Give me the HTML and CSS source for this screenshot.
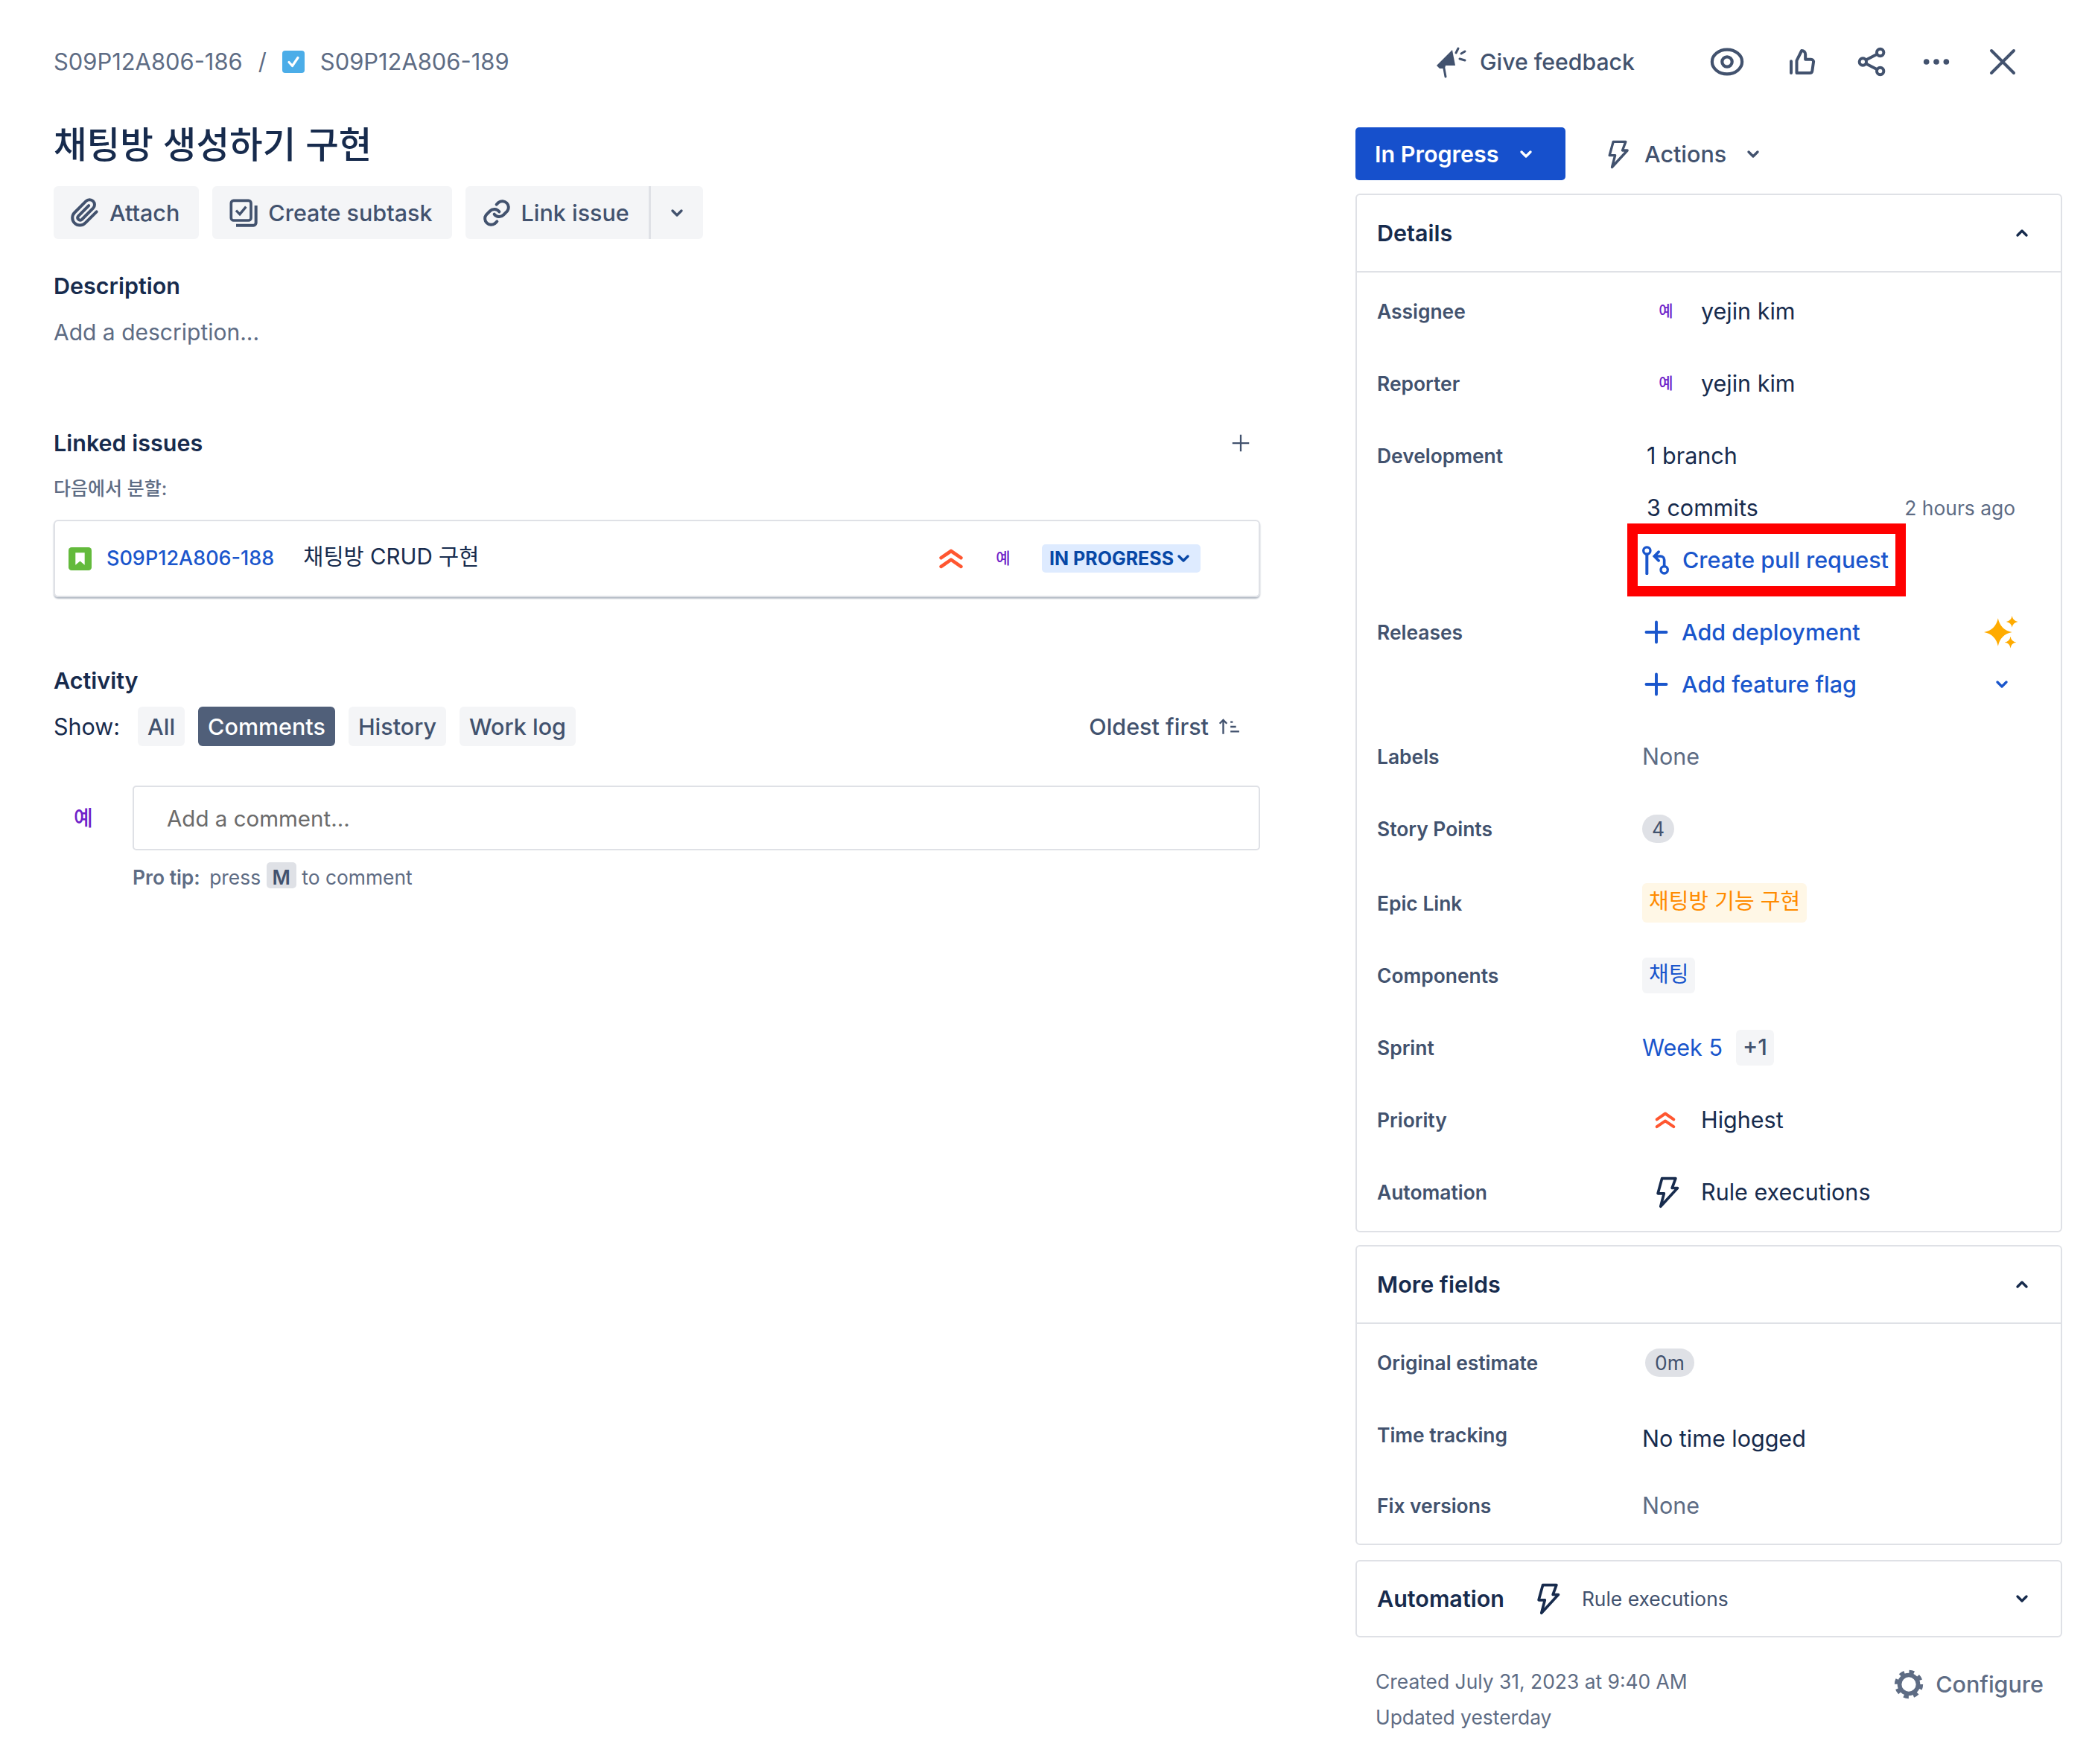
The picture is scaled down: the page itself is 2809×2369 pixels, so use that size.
FILE: index.html
```html
<!DOCTYPE html>
<html lang="ko">
  <head>
    <meta charset="UTF-8" />
    <meta name="viewport" content="width=device-width, initial-scale=1.0" />
    <title>S09P12A806-189</title>
    <link rel="stylesheet" href="styles.css">
  </head>
  <body>
    <svg class="defs" aria-hidden="true">
      <symbol id="chev-down" viewBox="0 0 20 14"><path d="M4 4l6 6 6-6" fill="none" stroke="currentColor" stroke-width="3.4" stroke-linecap="round" stroke-linejoin="round"/></symbol>
      <symbol id="chev-up" viewBox="0 0 20 14"><path d="M4 10l6-6 6 6" fill="none" stroke="currentColor" stroke-width="3.4" stroke-linecap="round" stroke-linejoin="round"/></symbol>
      <symbol id="bolt" viewBox="0 0 24 24"><path d="M8.5 2h10l-2.6 7h4L7.5 22.5 10 13H5.500z" fill="none" stroke="currentColor" stroke-width="2" stroke-linejoin="round"/></symbol>
      <symbol id="plus" viewBox="0 0 24 24"><path d="M12 3v18M3 12h18" fill="none" stroke="currentColor" stroke-width="2.600" stroke-linecap="round"/></symbol>
      <symbol id="highest" viewBox="0 0 24 24"><path d="M4 11.500l8-5.500 8 5.500M4 18.500l8-5.500 8 5.500" fill="none" stroke="#ff5630" stroke-width="2.800" stroke-linecap="round" stroke-linejoin="round"/></symbol>
    </svg>

    <main class="page">
      <section class="left">
        <nav class="crumbs">
          <span>S09P12A806-186</span>
          <span class="slash">/</span>
          <svg class="crumb-icon" viewBox="0 0 30 30"><rect width="30" height="30" rx="4" fill="#4bade8"/><path d="M9 15.500l4.500 5L21 9.500" fill="none" stroke="#fff" stroke-width="3.200" stroke-linecap="round" stroke-linejoin="round"/></svg>
          <span>S09P12A806-189</span>
        </nav>

        <h1 class="title">채팅방 생성하기 구현</h1>

        <div class="tools">
          <button class="tool">
            <svg class="ico" viewBox="0 0 24 24"><path d="M21.400 11l-9.200 9.200a6 6 0 0 1-8.500-8.500l9.200-9.200a4 4 0 0 1 5.700 5.700l-9.200 9.200a2 2 0 0 1-2.800-2.800l8.500-8.500" fill="none" stroke="currentColor" stroke-width="2.400" stroke-linecap="round" stroke-linejoin="round"/></svg>
            Attach
          </button>
          <button class="tool">
            <svg class="ico" viewBox="0 0 24 24"><rect x="2" y="2" width="16" height="16" rx="2" fill="none" stroke="currentColor" stroke-width="2.200"/><path d="M6 10l3 3 5-6" fill="none" stroke="currentColor" stroke-width="2"/><path d="M22 6v14a2 2 0 0 1-2 2H6" fill="none" stroke="currentColor" stroke-width="2.400"/></svg>
            Create subtask
          </button>
          <div class="tool-split">
            <button class="tool tool-link">
              <svg class="ico" viewBox="0 0 24 24"><path d="M10 13a5 5 0 0 0 7.500.5l3-3a5 5 0 0 0-7-7l-1.700 1.700M14 11a5 5 0 0 0-7.500-.5l-3 3a5 5 0 0 0 7 7l1.700-1.700" fill="none" stroke="currentColor" stroke-width="2.400" stroke-linecap="round"/></svg>
              Link issue
            </button>
            <button class="tool tool-more"><svg class="chev"><use href="#chev-down"/></svg></button>
          </div>
        </div>

        <h2 class="heading desc-head">Description</h2>
        <p class="placeholder">Add a description...</p>

        <div class="linked-head">
          <h2 class="heading">Linked issues</h2>
          <svg class="linked-add" viewBox="0 0 24 24"><path d="M12 3v18M3 12h18" fill="none" stroke="currentColor" stroke-width="1.800"/></svg>
        </div>
        <p class="linked-type">다음에서 분할:</p>

        <div class="issue-card">
          <svg class="story-icon" viewBox="0 0 30 30"><rect width="30" height="30" rx="4" fill="#63ba3c"/><path d="M9 7h12v16l-6-5-6 5z" fill="#fff"/></svg>
          <a class="issue-key">S09P12A806-188</a>
          <span class="issue-name">채팅방 CRUD 구현</span>
          <svg class="issue-prio"><use href="#highest"/></svg>
          <span class="avatar issue-avatar">예</span>
          <span class="lozenge">IN PROGRESS<svg class="chev"><use href="#chev-down"/></svg></span>
        </div>

        <h2 class="heading activity-head">Activity</h2>
        <div class="show-row">
          <span class="show-label">Show:</span>
          <button class="filter">All</button>
          <button class="filter filter-on">Comments</button>
          <button class="filter">History</button>
          <button class="filter">Work log</button>
          <span class="sort">Oldest first
            <svg class="sort-icon" viewBox="0 0 28 24"><path d="M7 21V4M2.500 8L7 3.500 11.500 8M16 6h3M16 12h7M16 18h11" fill="none" stroke="currentColor" stroke-width="2.200"/></svg>
          </span>
        </div>

        <div class="comment-row">
          <span class="avatar comment-avatar">예</span>
          <div class="comment-box">Add a comment...</div>
        </div>
        <p class="pro-tip"><b>Pro tip:</b> press <kbd>M</kbd> to comment</p>
      </section>

      <aside class="right">
        <div class="topbar">
          <svg class="ico-feedback" viewBox="0 0 44 44"><path d="M3 27L24 6l4 21z" fill="currentColor"/><path d="M3 27h12l-1 4H7z" fill="currentColor"/><path d="M13 31l2 11M32 4l-3 6M41 20l-7-2M36 11l5-3" fill="none" stroke="currentColor" stroke-width="3" stroke-linecap="round"/></svg>
          <span class="feedback">Give feedback</span>
          <div class="top-icons">
            <span class="top-btn btn-eye"><svg class="ico ico-eye" viewBox="0 0 24 24"><ellipse cx="12" cy="12" rx="10.500" ry="8.500" fill="none" stroke="currentColor" stroke-width="2.200"/><circle cx="12" cy="12" r="3.500" fill="none" stroke="currentColor" stroke-width="2.200"/></svg></span>
            <span class="top-btn btn-thumb"><svg class="ico" viewBox="0 0 24 24"><path d="M3 11.500V21M7.500 21V11l4-8c1.800 0 3 1.200 3 3v4h4.500a2 2 0 0 1 2 2.300l-1 7a2 2 0 0 1-2 1.700z" fill="none" stroke="currentColor" stroke-width="2.400" stroke-linejoin="round" stroke-linecap="round"/></svg></span>
            <span class="top-btn btn-share"><svg class="ico" viewBox="0 0 24 24"><circle cx="19" cy="4.500" r="2.800" fill="none" stroke="currentColor" stroke-width="2.400"/><circle cx="5" cy="12" r="2.800" fill="none" stroke="currentColor" stroke-width="2.400"/><circle cx="19" cy="19.500" r="2.800" fill="none" stroke="currentColor" stroke-width="2.400"/><path d="M7.500 10.500l9-4.700M7.500 13.500l9 4.700" fill="none" stroke="currentColor" stroke-width="2.400"/></svg></span>
            <span class="top-btn btn-more"><svg class="ico" viewBox="0 0 24 24"><circle cx="4" cy="12" r="2.300" fill="currentColor"/><circle cx="12" cy="12" r="2.300" fill="currentColor"/><circle cx="20" cy="12" r="2.300" fill="currentColor"/></svg></span>
            <span class="top-btn btn-close"><svg class="ico" viewBox="0 0 24 24"><path d="M3 3l18 18M21 3L3 21" fill="none" stroke="currentColor" stroke-width="2.400" stroke-linecap="round"/></svg></span>
          </div>
        </div>

        <div class="status-row">
          <button class="status">In Progress<svg class="chev"><use href="#chev-down"/></svg></button>
          <span class="actions"><svg class="ico"><use href="#bolt"/></svg>Actions<svg class="chev"><use href="#chev-down"/></svg></span>
        </div>

        <div class="panel">
          <div class="panel-head">
            <h3>Details</h3>
            <svg class="chev"><use href="#chev-up"/></svg>
          </div>
          <div class="panel-body">
            <div class="field"><span class="label">Assignee</span><div class="value person"><span class="avatar">예</span>yejin kim</div></div>
            <div class="field"><span class="label">Reporter</span><div class="value person"><span class="avatar">예</span>yejin kim</div></div>

            <div class="field">
              <span class="label">Development</span>
              <div class="value dev">
                <div class="dev-line">1 branch</div>
                <div class="dev-line">3 commits<span class="dev-time">2 hours ago</span></div>
                <a class="pr-link">
                  <svg class="ico" viewBox="0 0 24 24"><circle cx="5" cy="4.500" r="2.800" fill="none" stroke="currentColor" stroke-width="2"/><path d="M5 7.500V23" fill="none" stroke="currentColor" stroke-width="2.400" stroke-linecap="round"/><circle cx="19" cy="20" r="2.800" fill="none" stroke="currentColor" stroke-width="2"/><path d="M19 17v-5a3 3 0 0 0-3-3h-4M14.500 5.500L11 9l3.500 3.500" fill="none" stroke="currentColor" stroke-width="2.200" stroke-linecap="round"/></svg>
                  Create pull request
                </a>
              </div>
            </div>

            <div class="field">
              <span class="label">Releases</span>
              <div class="value dev">
                <div class="release-line"><svg class="ico"><use href="#plus"/></svg>Add deployment
                  <svg class="sparkle" viewBox="0 0 44 44"><path d="M18 4q3 15 18 18-15 3-18 18-3-15-18-18 15-3 18-18zM36 1q1 6.500 7.500 7.500-6.500 1-7.500 7.500-1-6.500-7.500-7.500 6.500-1 7.500-7.500zM34 27.500q1 6.500 7.500 7.500-6.500 1-7.500 7.500-1-6.500-7.500-7.500 6.500-1 7.500-7.500z" fill="#ffab00"/></svg>
                </div>
                <div class="release-line"><svg class="ico"><use href="#plus"/></svg>Add feature flag
                  <svg class="chev release-chev"><use href="#chev-down"/></svg>
                </div>
              </div>
            </div>

            <div class="field"><span class="label">Labels</span><div class="value none">None</div></div>
            <div class="field"><span class="label">Story Points</span><div class="value"><span class="pill">4</span></div></div>
            <div class="field field-epic"><span class="label">Epic Link</span><div class="value"><span class="tag tag-epic">채팅방 기능 구현</span></div></div>
            <div class="field"><span class="label">Components</span><div class="value"><span class="tag tag-comp">채팅</span></div></div>
            <div class="field"><span class="label">Sprint</span><div class="value sprint"><a>Week 5</a><span class="tag tag-more">+1</span></div></div>
            <div class="field"><span class="label">Priority</span><div class="value person"><svg class="field-prio"><use href="#highest"/></svg>Highest</div></div>
            <div class="field"><span class="label">Automation</span><div class="value person"><svg class="field-bolt"><use href="#bolt"/></svg>Rule executions</div></div>
          </div>
        </div>

        <div class="panel panel-more">
          <div class="panel-head">
            <h3>More fields</h3>
            <svg class="chev"><use href="#chev-up"/></svg>
          </div>
          <div class="panel-body more-body">
            <div class="field"><span class="label">Original estimate</span><div class="value"><span class="pill pill-est">0m</span></div></div>
            <div class="field"><span class="label">Time tracking</span><div class="value time-log">No time logged</div></div>
            <div class="field field-fix"><span class="label">Fix versions</span><div class="value none">None</div></div>
          </div>
        </div>

        <div class="panel panel-auto">
          <h3>Automation</h3>
          <svg class="auto-bolt"><use href="#bolt"/></svg>
          <span class="auto-text">Rule executions</span>
          <svg class="chev auto-chev"><use href="#chev-down"/></svg>
        </div>

        <footer class="foot">
          <div class="dates">
            <p>Created July 31, 2023 at 9:40 AM</p>
            <p>Updated yesterday</p>
          </div>
          <span class="configure">
            <svg class="ico" viewBox="0 0 24 24"><circle cx="12" cy="12" r="7.500" fill="none" stroke="currentColor" stroke-width="3.400"/><circle cx="12" cy="12" r="10" fill="none" stroke="currentColor" stroke-width="3" stroke-dasharray="4 3.850"/></svg>
            Configure
          </span>
        </footer>
      </aside>
    </main>
  </body>
</html>
```

FILE: styles.css
```css
* {
  box-sizing: border-box;
}

body {
  margin: 0;
  background: #fff;
  color: #172b4d;
  font-family: Inter, "Noto Sans CJK KR", sans-serif;
  font-size: 30.500px;
  line-height: 40px;
}

h1,
h2,
h3,
p {
  margin: 0;
}

button {
  border: none;
  font: inherit;
  color: inherit;
}

a {
  color: #1a56cc;
}

.defs {
  display: none;
}

.page {
  display: flex;
  gap: 128px;
  padding: 63px 40px 0 72px;
}

.left {
  width: 1620px;
}

.right {
  width: 949px;
}

.ico {
  width: 40px;
  height: 40px;
  flex: none;
}

.chev {
  width: 20px;
  height: 14px;
  flex: none;
}

.avatar {
  color: #6f22c9;
  font-size: 21px;
  font-weight: 500;
  width: 28px;
  text-align: center;
}

/* left column */
.crumbs {
  display: flex;
  align-items: center;
  color: #5e6c84;
  height: 40px;
  font-size: 30.900px;
}

.slash {
  margin: 0 21px;
}

.crumb-icon {
  width: 30px;
  height: 30px;
  margin-right: 21px;
}

.title {
  margin-top: 62px;
  font-size: 48.500px;
  line-height: 60px;
  font-weight: 500;
}

.tools {
  display: flex;
  gap: 18px;
  margin-top: 25px;
}

.tool {
  display: flex;
  align-items: center;
  gap: 13px;
  height: 71px;
  padding: 0 26px 0 22px;
  background: #f4f5f7;
  border-radius: 6px;
  color: #42526e;
  font-weight: 500;
}

.tool-split {
  display: flex;
}

.tool-link {
  border-radius: 6px 0 0 6px;
  border-right: 3px solid #dfe1e6;
  padding-right: 26px;
}

.tool-more {
  border-radius: 0 6px 6px 0;
  padding: 0 25px;
}

.heading {
  font-size: 30.500px;
  line-height: 40px;
  font-weight: 600;
}

.desc-head {
  margin-top: 43px;
}

.placeholder {
  margin-top: 22px;
  color: #5e6c84;
  font-size: 30px;
}

.linked-head {
  display: flex;
  justify-content: space-between;
  align-items: center;
  margin-top: 109px;
  padding-right: 11px;
}

.linked-add {
  width: 30px;
  height: 30px;
  color: #42526e;
}

.linked-type {
  margin-top: 21px;
  color: #5e6c84;
  font-size: 25px;
  font-weight: 500;
}

.issue-card {
  display: flex;
  align-items: center;
  height: 104px;
  margin-top: 22px;
  padding: 0 78px 0 18px;
  border: 2px solid #dfe1e6;
  border-radius: 6px;
  box-shadow: 0 2px 2px #b3bac5;
}

.story-icon {
  width: 31px;
  height: 31px;
  flex: none;
}

.issue-key {
  margin-left: 20px;
  font-weight: 500;
  font-size: 27px;
}

.issue-name {
  margin-left: 39px;
  position: relative;
  top: -3px;
  font-size: 29.500px;
}

.issue-prio {
  width: 40px;
  height: 40px;
  margin-left: auto;
}

.issue-avatar {
  margin-left: 36px;
}

.lozenge {
  display: flex;
  align-items: center;
  gap: 3px;
  height: 38px;
  margin-left: 38px;
  padding: 0 13px 0 10px;
  background: #deebff;
  border-radius: 5px;
  color: #0747a6;
  font-size: 25px;
  font-weight: 700;
}

.activity-head {
  margin-top: 92px;
}

.show-row {
  display: flex;
  align-items: center;
  gap: 18px;
  margin-top: 15px;
}

.show-label {
  margin-right: 6px;
}

.filter {
  height: 53px;
  padding: 0 13px;
  background: #f4f5f7;
  border-radius: 6px;
  color: #42526e;
  font-weight: 500;
}

.filter-on {
  background: #505f79;
  color: #fff;
}

.sort {
  display: flex;
  align-items: center;
  gap: 12px;
  margin-left: auto;
  padding-right: 27px;
  color: #42526e;
  font-weight: 500;
}

.sort-icon {
  width: 30px;
  height: 26px;
}

.comment-row {
  display: flex;
  align-items: center;
  margin-top: 53px;
}

.comment-avatar {
  width: 106px;
  padding-right: 26px;
  font-size: 28px;
}

.comment-box {
  flex: 1;
  height: 87px;
  padding: 0 44px;
  border: 2px solid #dfe1e6;
  border-radius: 5px;
  color: #6b6b6b;
  font-size: 29.500px;
  line-height: 85px;
}

.pro-tip {
  margin: 16px 0 0 106px;
  color: #5e6c84;
  font-size: 26.400px;
}

.pro-tip b {
  margin-right: 5px;
  font-weight: 600;
}

kbd {
  display: inline-block;
  padding: 0 8px;
  height: 35px;
  line-height: 35px;
  background: #dfe1e6;
  border-radius: 5px;
  color: #42526e;
  font: inherit;
  font-weight: 600;
}

/* right column */
.topbar {
  display: flex;
  align-items: center;
  height: 40px;
  padding-left: 106px;
  color: #42526e;
}

.ico-feedback {
  width: 44px;
  height: 44px;
}

.feedback {
  margin-left: 17px;
  font-size: 30.200px;
  font-weight: 500;
}

.top-icons {
  display: flex;
  margin-left: auto;
  padding-right: 34px;
}

.top-btn {
  display: flex;
  justify-content: center;
  align-items: center;
}

.ico-eye {
  width: 46px;
  height: 46px;
}

.btn-eye { width: 104px; }
.btn-thumb { width: 98px; }
.btn-share { width: 88px; }
.btn-more { width: 86px; }
.btn-close { width: 92px; }

.status-row {
  display: flex;
  align-items: center;
  margin-top: 68px;
  color: #42526e;
}

.status {
  display: flex;
  align-items: center;
  gap: 26px;
  width: 282px;
  height: 71px;
  padding: 0 26px;
  background: #1650cc;
  border-radius: 5px;
  color: #fff;
  font-weight: 600;
}

.actions {
  display: flex;
  align-items: center;
  margin-left: 50px;
  font-weight: 500;
}

.actions .ico {
  margin-right: 16px;
}

.actions .chev {
  margin-left: 26px;
}

.panel {
  margin-top: 20px;
  border: 2px solid #dfe1e6;
  border-radius: 6px;
}

.status-row + .panel {
  margin-top: 18px;
}

.panel-more {
  margin-top: 17px;
}

.panel h3 {
  font-size: 30.500px;
  font-weight: 600;
}

.panel-head {
  display: flex;
  justify-content: space-between;
  align-items: center;
  height: 104px;
  padding: 0 42px 0 27px;
  border-bottom: 2px solid #dfe1e6;
}

.panel-body {
  padding: 3px 27px 4px;
}

.field {
  display: grid;
  grid-template-columns: 356px 1fr;
  align-items: center;
  padding: 13.500px 0;
}

.label {
  color: #42526e;
  font-size: 26.400px;
  font-weight: 600;
  align-self: start;
  line-height: 70px;
}

.value {
  display: flex;
  align-items: center;
  min-height: 70px;
}

.none {
  color: #5e6c84;
}

.person .avatar {
  width: 28px;
  margin: 0 33px 0 18px;
}

.field-prio {
  width: 34px;
  height: 34px;
  margin: 0 31px 0 14px;
}

.field-bolt {
  width: 44px;
  height: 44px;
  margin: 0 24px 0 11px;
}

.dev {
  display: block;
}

.dev-line {
  display: flex;
  justify-content: space-between;
  align-items: center;
  height: 70px;
  padding: 0 34px 0 6px;
}

.dev-time {
  color: #5e6c84;
  font-size: 26.400px;
}

.pr-link,
.release-line {
  display: flex;
  align-items: center;
  gap: 8px;
  color: #1a56cc;
  font-weight: 500;
}

.pr-link {
  width: 374px;
  height: 98px;
  margin: -14px 0 -14px -20px;
  border: 14px solid #f00;
  padding-left: 4px;
  gap: 16px;
}

.release-line {
  height: 70px;
  padding-right: 34px;
}

.release-line .ico {
  width: 36px;
  height: 36px;
  margin: 0 8px 0 1px;
}

.sparkle {
  width: 46px;
  height: 46px;
  margin-left: auto;
  margin-right: -4px;
}

.release-chev {
  margin-left: auto;
  margin-right: 8px;
}

.pill {
  display: inline-block;
  min-width: 43px;
  height: 38px;
  padding: 0 10px;
  background: #dfe1e6;
  border-radius: 19px;
  font-size: 26.400px;
  line-height: 38px;
  text-align: center;
  color: #42526e;
}

.pill-est {
  margin-left: 4px;
  padding: 0 13px;
}

.tag {
  display: inline-block;
  padding: 0 9px;
  height: 48px;
  line-height: 46px;
  border-radius: 6px;
}

.tag-epic {
  height: 53px;
  line-height: 50px;
  font-size: 29px;
  background: #fff7e6;
  color: #ff8b00;
}

.tag-comp {
  background: #f4f5f7;
  color: #1a56cc;
  font-size: 29px;
}

.tag-more {
  margin-left: 18px;
  background: #f4f5f7;
  color: #42526e;
  font-weight: 500;
}

.field-epic {
  padding-top: 16.500px;
}

.more-body {
  padding-bottom: 3px;
}

.time-log {
  padding-top: 10px;
}

.field-fix {
  margin-top: -2px;
}

.panel-auto {
  display: flex;
  align-items: center;
  height: 104px;
  padding: 0 42px 0 27px;
}

.auto-bolt {
  width: 44px;
  height: 44px;
  margin-left: 36px;
}

.auto-text {
  margin-left: 24px;
  color: #42526e;
  font-size: 26.400px;
}

.auto-chev {
  margin-left: auto;
}

.foot {
  display: flex;
  justify-content: space-between;
  margin-top: 35px;
  padding: 0 25px 0 27px;
  color: #5e6c84;
  font-size: 26.400px;
}

.dates p {
  line-height: 48px;
}

.configure {
  display: flex;
  align-items: center;
  gap: 16px;
  height: 56px;
  font-size: 30.500px;
  font-weight: 500;
}
```
